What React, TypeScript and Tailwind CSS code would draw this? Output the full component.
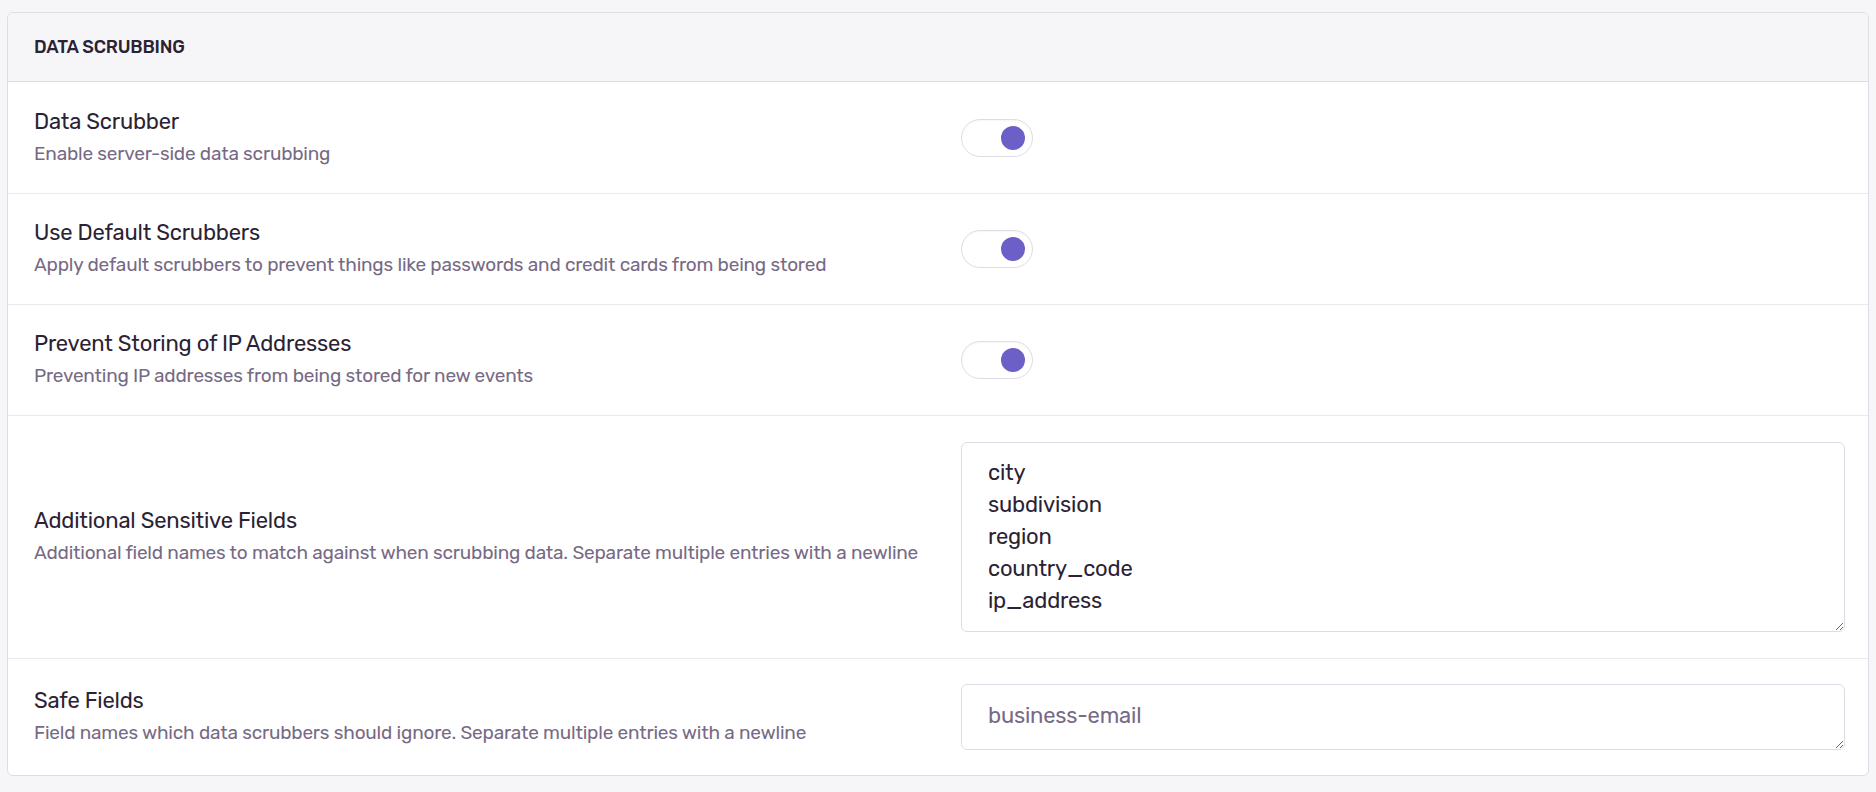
export default function App() {
  const font = { fontFamily: "Rubik, Inter, 'Noto Sans', sans-serif" };
  const Toggle = () => (
    <div className="w-[72px] h-[38px] rounded-full border border-[#e0dce5] bg-white flex items-center justify-end pr-[7px] shadow-[inset_0_1px_2px_rgba(0,0,0,0.04)]">
      <div className="w-[24px] h-[24px] rounded-full bg-[#6c5fc7]" />
    </div>
  );
  const Label = ({ t, d }: { t: string; d: string }) => (
    <div className="w-[927px] shrink-0 pr-[40px]">
      <div className="text-[22px] leading-[30px] text-[#2b2233]">{t}</div>
      <div className="text-[19px] leading-[30px] text-[#776a85] mt-[2px]">{d}</div>
    </div>
  );
  return (
    <div className="min-h-[792px] bg-[#f6f6f8] pt-[12px] px-[7px] pb-[17px] tracking-[-0.2px]" style={font}>
      <div className="bg-white border border-[#e0dce5] rounded-[6px] overflow-hidden">
        <div className="h-[69px] bg-[#f6f6f8] border-b border-[#e0dce5] flex items-center px-[26px] text-[18px] font-medium text-[#2b2233]">
          DATA SCRUBBING
        </div>
        <div className="h-[112px] flex items-center pl-[26px] pr-[23px] border-b border-[#ebe8ee]">
          <Label t="Data Scrubber" d="Enable server-side data scrubbing" />
          <Toggle />
        </div>
        <div className="h-[111px] flex items-center pl-[26px] pr-[23px] border-b border-[#ebe8ee]">
          <Label t="Use Default Scrubbers" d="Apply default scrubbers to prevent things like passwords and credit cards from being stored" />
          <Toggle />
        </div>
        <div className="h-[111px] flex items-center pl-[26px] pr-[23px] border-b border-[#ebe8ee]">
          <Label t="Prevent Storing of IP Addresses" d="Preventing IP addresses from being stored for new events" />
          <Toggle />
        </div>
        <div className="h-[243px] flex items-center pl-[26px] pr-[23px] border-b border-[#ebe8ee]">
          <Label t="Additional Sensitive Fields" d="Additional field names to match against when scrubbing data. Separate multiple entries with a newline" />
          <textarea
            className="flex-1 h-[190px] border border-[#e0dce5] rounded-[6px] px-[26px] py-[14px] text-[22px] leading-[32px] text-[#2b2233] resize-y outline-none"
            style={font}
            defaultValue={"city\nsubdivision\nregion\ncountry_code\nip_address"}
          />
        </div>
        <div className="h-[116px] flex items-center pl-[26px] pr-[23px]">
          <Label t="Safe Fields" d="Field names which data scrubbers should ignore. Separate multiple entries with a newline" />
          <textarea
            className="flex-1 h-[66px] border border-[#e0dce5] rounded-[6px] px-[26px] py-[15px] text-[22px] leading-[32px] text-[#2b2233] placeholder:text-[#776a85] resize-y outline-none"
            style={font}
            placeholder="business-email"
          />
        </div>
      </div>
    </div>
  );
}
